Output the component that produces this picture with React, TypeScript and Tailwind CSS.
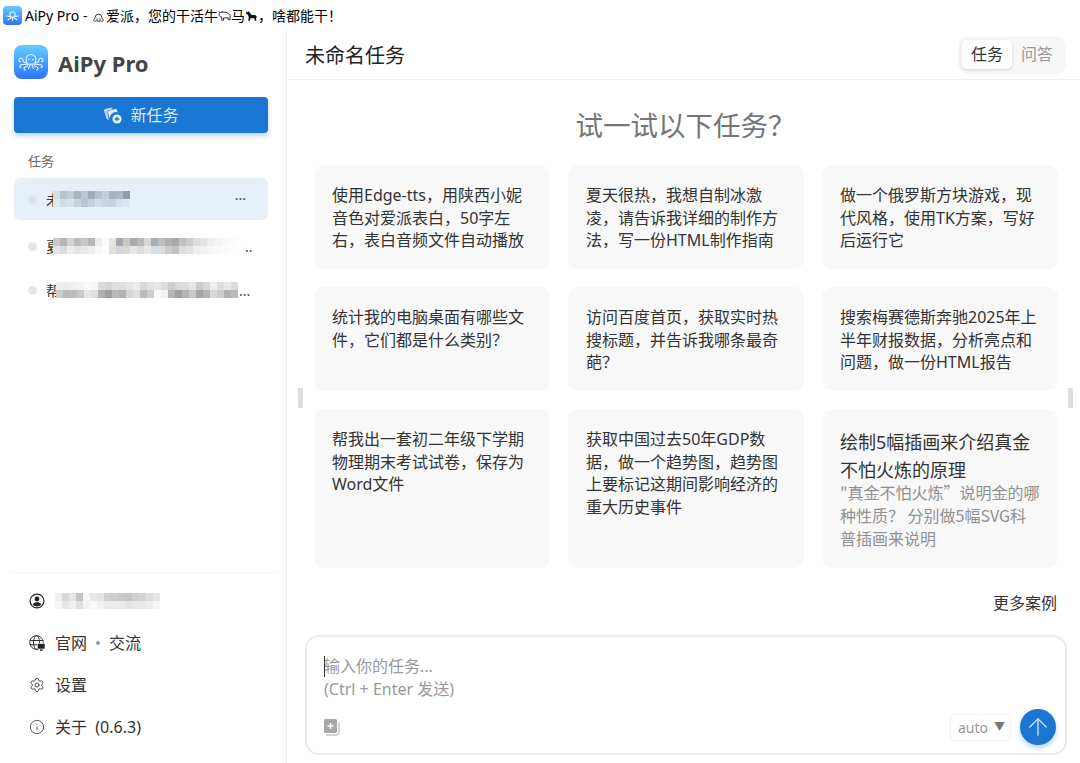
import { ArrowUp, Info, Settings } from 'lucide-react';

const cards = [
  '使用Edge-tts，用陕西小妮音色对爱派表白，50字左右，表白音频文件自动播放',
  '夏天很热，我想自制冰激凌，请告诉我详细的制作方法，写一份HTML制作指南',
  '做一个俄罗斯方块游戏，现代风格，使用TK方案，写好后运行它',
  '统计我的电脑桌面有哪些文件，它们都是什么类别？',
  '访问百度首页，获取实时热搜标题，并告诉我哪条最奇葩？',
  '搜索梅赛德斯奔驰2025年上半年财报数据，分析亮点和问题，做一份HTML报告',
  '帮我出一套初二年级下学期物理期末考试试卷，保存为Word文件',
  '获取中国过去50年GDP数据，做一个趋势图，趋势图上要标记这期间影响经济的重大历史事件',
];

// pixelated patch that stands in for the redacted titles
function Mosaic({ rows, className }: { rows: string[][]; className?: string }) {
  return (
    <div className={`flex flex-col ${className ?? ''}`}>
      {rows.map((row, r) => (
        <div key={r} className="flex h-[8px]">
          {row.map((c, i) => (
            <span key={i} className="h-full w-[7px] shrink-0" style={{ backgroundColor: c }} />
          ))}
        </div>
      ))}
    </div>
  );
}

function Logo() {
  return (
    <div className="flex h-[34px] w-[34px] items-center justify-center rounded-[8px] bg-gradient-to-b from-[#66ccff] to-[#2f72ff]">
      <svg viewBox="0 0 34 34" className="h-[34px] w-[34px]" fill="none" stroke="#eaf6ff" strokeWidth="1.100" strokeLinecap="round">
        <path d="M12 14.500a5 5 0 0 1 10 0c0 2-1 3-1.500 4.500h-7C13 17.500 12 16.500 12 14.500Z" />
        <path d="M12.500 17c-2 1.500-3.500-.5-3.500-2a2 2 0 0 0-4 .5c0 1 1 1.500 1.500 1" />
        <path d="M21.500 17c2 1.500 3.500-.5 3.500-2a2 2 0 0 1 4 .5c0 1-1 1.500-1.500 1" />
        <path d="M13 19c-2 1-5 0-6.500 1-1.200.8-1 2.500.5 2.500" />
        <path d="M21 19c2 1 5 0 6.500 1 1.200.8 1 2.500-.5 2.500" />
        <path d="M14 19.500c-.5 2.500-2.500 2-3.500 3-1 1-.5 2.500 1 2.500" />
        <path d="M20 19.500c.5 2.500 2.500 2 3.500 3 1 1 .5 2.500-1 2.500" />
        <path d="M16 19.500c0 2-1 3-1.500 4M18 19.500c0 2 1 3 1.500 4" />
        <circle cx="15" cy="14.500" r=".8" fill="#fff" stroke="none" />
        <circle cx="19" cy="14.500" r=".8" fill="#fff" stroke="none" />
      </svg>
    </div>
  );
}

function NewTaskIcon() {
  return (
    <svg viewBox="0 0 20 20" className="h-[20px] w-[20px]">
      <path d="M1 5.500c0-.8.400-1.300 1.200-1.500l6.300-1.500 1.500 1.500-4.500 1.500c-.9.300-1.300 1-1.100 2l1.400 7.500-1.300-.5c-.6-.2-1-.7-1.200-1.300Z" fill="#c3d9f0" />
      <path d="M5 7.500c-.2-.8.300-1.500 1-1.700l6.300-1.700c.8-.2 1.400.1 1.700.8l.8 2.300a6.500 6.500 0 0 0-7.500 8.800Z" fill="#e6eff9" />
      <circle cx="14" cy="14" r="5.500" fill="#1976d2" />
      <circle cx="14" cy="14" r="4.600" fill="#e6eff9" />
      <path d="M14 11.700v4.600M11.700 14h4.600" stroke="#1976d2" strokeWidth="1.300" />
    </svg>
  );
}

function UserIcon() {
  return (
    <svg viewBox="0 0 16 16" className="h-[16px] w-[16px] shrink-0">
      <circle cx="8" cy="8" r="6.900" fill="none" stroke="#222" strokeWidth="1.200" />
      <circle cx="8" cy="6" r="2.400" fill="#222" />
      <path d="M3.700 11.500C4.500 9.800 6 9.200 8 9.200s3.500.6 4.300 2.300A5.500 5.500 0 0 1 8 13.500a5.500 5.500 0 0 1-4.300-2Z" fill="#222" />
    </svg>
  );
}

function GlobeIcon() {
  return (
    <svg viewBox="0 0 16 16" className="h-[16px] w-[16px] shrink-0" fill="none" stroke="#333" strokeWidth="1">
      <circle cx="7.500" cy="7.500" r="6.800" />
      <ellipse cx="7.500" cy="7.500" rx="3" ry="6.800" />
      <path d="M1 5.500h13M1 9.800h7" />
      <rect x="8.500" y="8.500" width="7.500" height="5.500" rx=".8" fill="#222" stroke="#fff" strokeWidth=".6" />
      <path d="M11 15h2.500" stroke="#222" strokeWidth="1.500" />
    </svg>
  );
}

function AttachIcon() {
  return (
    <svg viewBox="0 0 16 17" className="h-[17px] w-[16px]">
      <rect x="0" y="0" width="13" height="14" rx="1.500" fill="#a8a8a8" />
      <path d="M6.500 4v6M3.500 7h6" stroke="#fff" strokeWidth="1.400" />
      <path d="M15 3v10.500a2.500 2.500 0 0 1-2.500 2.500H2" fill="none" stroke="#a8a8a8" strokeWidth="1" />
    </svg>
  );
}

// the window title's emoji render as black outlines on the desktop
function TitleOctopus() {
  return (
    <svg viewBox="0 0 14 14" className="mx-[1px] inline-block h-[14px] w-[13px] align-[-2px]" fill="none" stroke="#222" strokeWidth="1">
      <path d="M3.500 8.500a3.500 3.500 0 1 1 7 0" />
      <path d="M3.500 8.500C3 10 1.500 10.500 2 12c.5 1 2 1 2.500 0M10.500 8.500c.5 1.500 2 2 1.500 3.500-.5 1-2 1-2.500 0M5.500 9.500c0 1.500-.5 2 0 2.500M8.500 9.500c0 1.500.5 2 0 2.500M5 12.500h4" />
    </svg>
  );
}

function TitleCow() {
  return (
    <svg viewBox="0 0 14 14" className="inline-block h-[14px] w-[13px] align-[-2px]" fill="none" stroke="#222" strokeWidth="1">
      <path d="M1 4.500C2 3 5 2.500 8 3c2.500.4 4.500 1.500 5 3.500V11h-2V9H6v2.500H4V8C2 8 .500 6 1 4.500Z" />
      <path d="M2 3.500 1 2M4 3 4.500 1.500" />
    </svg>
  );
}

function TitleHorse() {
  return (
    <svg viewBox="0 0 14 14" className="inline-block h-[14px] w-[13px] align-[-2px]" fill="#111">
      <path d="M1 2 3 3l1-1 1 1 2 3h4l2 2-1 1v3h-1.500l-.5-2.500H6L5 12H3.500l.5-4-1-2.500L1.500 5Z" />
    </svg>
  );
}

export default function App() {
  return (
    <div
      className="flex h-[763px] w-[1080px] flex-col overflow-hidden bg-white text-[#333]"
      style={{ fontFamily: '"Noto Sans", "Noto Sans CJK SC", sans-serif' }}
    >
      {/* Title bar */}
      <div className="flex h-[30px] shrink-0 items-center gap-[3px] pl-[3px] text-[14px] text-black">
        <div className="flex h-[19px] w-[19px] items-center justify-center rounded-[4px] bg-gradient-to-b from-[#66ccff] to-[#2f72ff]">
          <svg viewBox="0 0 14 14" className="h-[15px] w-[15px]" fill="none" stroke="#eaf6ff" strokeWidth="1" strokeLinecap="round">
            <path d="M4.500 6a2.500 2.500 0 0 1 5 0c0 1-.5 1.500-1 2.500h-3C5 7.500 4.500 7 4.500 6Z" />
            <path d="M5 7.500c-1.500 1-2.500-.5-3.500 0M9 7.500c1.500 1 2.500-.5 3.500 0M5.500 9c-.5 1-2 1-2.500 2M8.500 9c.5 1 2 1 2.500 2M7 9v2.500" />
          </svg>
        </div>
        <span className="whitespace-nowrap">
          AiPy Pro - <TitleOctopus />爱派，您的干活牛<TitleCow />马<TitleHorse />，啥都能干！
        </span>
      </div>

      <div className="flex min-h-0 flex-1">
        {/* Sidebar */}
        <aside className="flex w-[287px] shrink-0 flex-col border-r border-[#eeeeee]">
          <div className="flex items-center gap-[10px] pl-[14px] pt-[15px]">
            <Logo />
            <span className="translate-y-[1px] text-[22px] font-bold leading-[34px] text-[#444]">AiPy Pro</span>
          </div>

          <div className="pl-[14px] pr-[18px] pt-[18px]">
            <button className="flex h-[36px] w-full items-center justify-center gap-[7px] rounded-[4px] bg-[#1976d2] text-[16px] text-[#dce9f6] shadow-[0_3px_5px_rgba(25,118,210,0.3)]">
              <NewTaskIcon />
              新任务
            </button>
          </div>

          <div className="pl-[28px] pt-[18px] text-[13px] leading-[20px] text-[#666]">任务</div>

          <div className="flex flex-col pl-[14px] pr-[18px] pt-[7px]">
            <div className="flex h-[42px] items-center rounded-[6px] bg-[#e7f0f9] pl-[14px] pr-[22px]">
              <span className="h-[9px] w-[9px] rounded-full bg-[#dfe3e8]" />
              <span className="ml-[9px] text-[14px] text-[#333]">未</span>
              <Mosaic
                className="-ml-[7px]"
                rows={[
                  ['#d5dde5', '#b8c3cc', '#c4ced6', '#a9b4be', '#bcc7d1', '#9fabb6', '#b7c2cc', '#c5cfd8', '#a7b3be', '#acb7c1', '#8f9ba6'],
                  ['#dfe7ef', '#d3dce4', '#d8e1e9', '#c9d3dc', '#b8c5d0', '#c5d0da', '#d3dde6', '#cad5df', '#c8d3dd', '#d7e1ea', '#dce6ef'],
                ]}
              />
              <span className="ml-auto text-[14px] leading-none text-[#444]">···</span>
            </div>
            <div className="mt-[3px] flex h-[46px] items-center pl-[14px]">
              <span className="h-[9px] w-[9px] rounded-full bg-[#e6e6e6]" />
              <span className="ml-[9px] text-[14px] text-[#333]">夏</span>
              <Mosaic
                className="-ml-[7px]"
                rows={[
                  ['#c9c9c9', '#b5b5b5', '#d2d2d2', '#bdbdbd', '#c6c6c6', '#b3b8bf', '#ededed', '#fafafa', '#e9e4e0', '#a2a9b0', '#c7c7c7', '#a9a9a9', '#b9b9b9', '#d7d7d7', '#a3b0bb', '#bdbdbd', '#b0b0b0', '#a8a8a8', '#c0c0c0', '#cdcdcd', '#dddddd', '#e5e5e5', '#eeeeee', '#f4f4f4', '#f8f8f8', '#fbfbfb', '#fdfdfd'],
                  ['#e6e6e6', '#dddddd', '#ededed', '#e5e5e5', '#e9e9e9', '#eeeeee', '#f8f8f8', '#fdfdfd', '#e5dfdb', '#d5d5d5', '#d9d9d9', '#e6e6e6', '#dcdcdc', '#e7e7e7', '#d8dde2', '#dcdcdc', '#cdcdcd', '#c3c3c3', '#dddddd', '#e2e2e2', '#f0f0f0', '#f2f2f2', '#f6f6f6', '#f9f9f9', '#fbfbfb', '#fdfdfd', '#fefefe'],
                ]}
              />
              <span className="ml-[3px] text-[14px] text-[#444]">..</span>
            </div>
            <div className="flex h-[42px] items-center pl-[14px]">
              <span className="h-[9px] w-[9px] rounded-full bg-[#e6e6e6]" />
              <span className="ml-[9px] text-[14px] text-[#333]">帮</span>
              <Mosaic
                className="-ml-[4px]"
                rows={[
                  ['#eeeeee', '#ededed', '#f0f0f0', '#f4f4f4', '#fafafa', '#f6f6f6', '#dcdcdc', '#d6d6d6', '#dfdfdf', '#dedede', '#e5e5e5', '#ececec', '#d8d8d8', '#e2e2e2', '#e8e8e8', '#dbdbdb', '#cfcfcf', '#d9d9d9', '#dcdcdc', '#e6e6e6', '#cccccc', '#d9d9d9', '#eeeeee', '#dedede', '#e8e8e8', '#dcdcdc'],
                  ['#cccccc', '#b9b9b9', '#bdbdbd', '#c9c9c9', '#e6e6e6', '#dedede', '#b0b0b0', '#a0a0a0', '#b9b9b9', '#aeb2b8', '#d5d5d5', '#e0e0e0', '#bcbcbc', '#cfcfcf', '#fafafa', '#f3f3f3', '#b4b4b4', '#a0a0a0', '#b4b4b4', '#c8c8c8', '#a6a6a6', '#b5b5b5', '#d9d9d9', '#cccccc', '#b0b0b0', '#bbbbbb'],
                ]}
              />
              <span className="ml-[1px] text-[14px] text-[#444]">...</span>
            </div>
          </div>

          <div className="mx-[10px] mt-auto border-t border-[#f5f5f5] pb-[15px] pl-[19px] pr-[4px] pt-[7px] text-[16px] text-[#333]">
            <div className="flex h-[42px] items-center gap-[10px]">
              <UserIcon />
              <Mosaic
                rows={[
                  ['#eeeeee', '#d9d9d9', '#e5e5e5', '#c4c4c4', '#f6f6f6', '#e6e8ea', '#e4e4e4', '#d4d0d0', '#cccccc', '#c6c8cc', '#c6c6c6', '#cfcfcf', '#d4d4d4', '#dddddd', '#e8e8e8'],
                  ['#f5f5f5', '#e8e8e8', '#efefef', '#dfdfdf', '#f4f4f4', '#f9f9f9', '#f1f1f1', '#ececec', '#eaeaea', '#ebebeb', '#e4e4e4', '#e8e8e8', '#e9e9e9', '#eeeeee', '#f7f7f7'],
                ]}
              />
            </div>
            <div className="flex h-[42px] items-center gap-[10px]">
              <GlobeIcon />
              <span className="flex items-center gap-[9px]">
                官网
                <span className="h-[4px] w-[4px] rounded-full bg-[#999]" />
                交流
              </span>
            </div>
            <div className="flex h-[42px] items-center gap-[10px]">
              <Settings size={16} strokeWidth={1.300} />
              <span>设置</span>
            </div>
            <div className="flex h-[42px] items-center gap-[10px]">
              <Info size={16} strokeWidth={1.200} />
              <span>关于&nbsp;&nbsp;(0.6.3)</span>
            </div>
          </div>
        </aside>

        {/* Main */}
        <main className="relative flex min-w-0 flex-1 flex-col">
          <header className="flex h-[50px] shrink-0 items-center justify-between border-b border-[#f0f0f0] pl-[18px] pr-[14px]">
            <h1 className="pt-[3px] text-[20px] text-[#222]">未命名任务</h1>
            <div className="flex h-[38px] w-[108px] items-center rounded-[10px] bg-[#f7f7f7] px-[4px] pb-[1px]">
              <span className="flex h-[29px] w-[50px] items-center justify-center rounded-[5px] bg-white text-[16px] text-[#333] shadow-[0_1px_3px_rgba(0,0,0,0.15)]">任务</span>
              <span className="flex h-[29px] w-[50px] items-center justify-center text-[16px] text-[#999]">问答</span>
            </div>
          </header>

          <h2 className="pl-[4px] pt-[25px] text-center text-[27.500px] leading-[42px] text-[#757575]">试一试以下任务？</h2>

          <div className="grid grid-cols-[236px_236px_236px] grid-rows-[104px_104px_159px] gap-[18px] pl-[27px] pt-[18px]">
            {cards.map((c) => (
              <div key={c} className="rounded-[10px] bg-[#f8f8f8] px-[18px] py-[19px] text-[16px] leading-[22.500px] text-[#333]">
                {c}
              </div>
            ))}
            <div className="rounded-[10px] bg-[#f8f8f8] pl-[18px] pr-[16px] pt-[19px]">
              <div className="text-[18px] leading-[28px] text-[#333]">绘制5幅插画来介绍真金不怕火炼的原理</div>
              <div className="-mt-[3px] font-['Noto_Sans_CJK_SC'] text-[16px] leading-[23px] text-[#909090]">
                "真金不怕火炼”说明金的哪种性质？ 分别做5幅SVG科普插画来说明
              </div>
            </div>
          </div>

          <div className="pr-[23px] pt-[24px] text-right text-[16px] leading-[22px] text-[#333]">更多案例</div>

          {/* Composer */}
          <div className="mt-auto pb-[8px] pl-[18px] pr-[13px]">
            <div className="h-[120px] rounded-[14px] border-2 border-[#ececec] pl-[17px] pr-[9px] pt-[18px]">
              <div className="text-[16px] leading-[23px] text-[#999]">
                <div className="relative">
                  <span className="absolute left-0 top-[1px] h-[21px] w-px bg-[#333]" />
                  输入你的任务...
                </div>
                <div>(Ctrl + Enter 发送)</div>
              </div>
              <div className="flex items-center pt-[8px]">
                <AttachIcon />
                <div className="ml-auto flex h-[27px] w-[61px] items-center justify-center gap-[6px] rounded-[5px] border border-[#f0f0f0] pl-[2px] text-[14px] text-[#999]">
                  auto <span className="text-[11px] text-[#777]">▼</span>
                </div>
                <button className="ml-[9px] flex h-[36px] w-[36px] items-center justify-center rounded-full bg-[#1976d2] text-[#dce9f6] shadow-[0_3px_5px_rgba(25,118,210,0.3)]">
                  <ArrowUp size={28} strokeWidth={1.100} />
                </button>
              </div>
            </div>
          </div>

          {/* Splitter grips */}
          <span className="absolute left-[11px] top-[358px] h-[20px] w-[5px] rounded-[1px] bg-[#dddddd]" />
          <span className="absolute right-[7px] top-[358px] h-[20px] w-[5px] rounded-[1px] bg-[#dddddd]" />
        </main>
      </div>
    </div>
  );
}
